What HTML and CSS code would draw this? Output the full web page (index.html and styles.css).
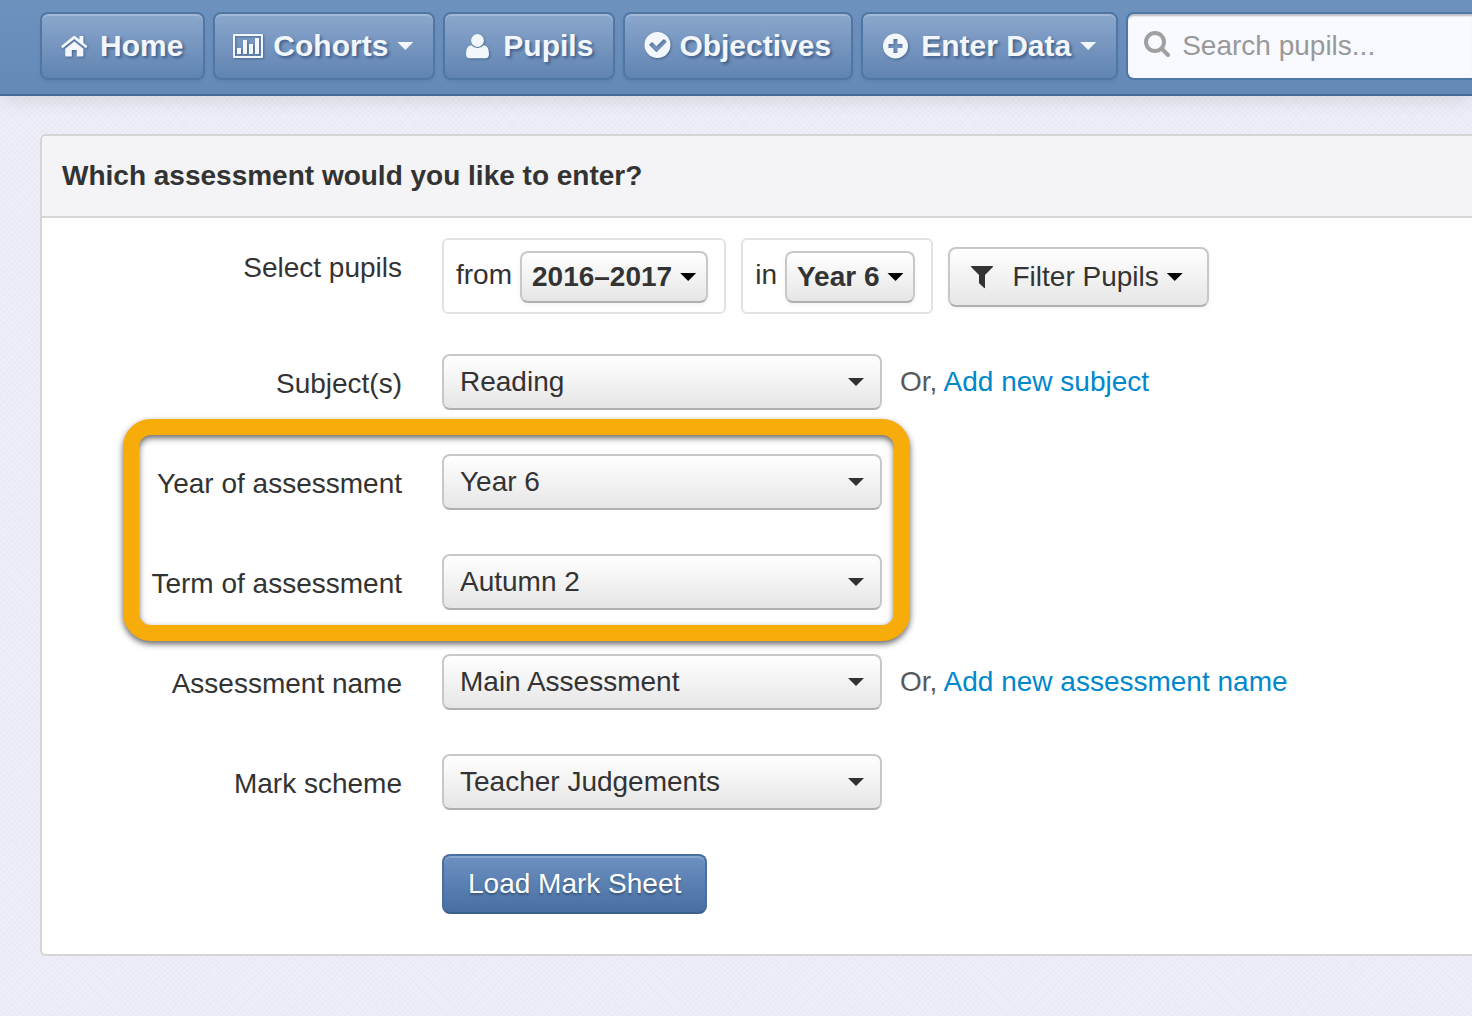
FILE: index.html
```html
<!DOCTYPE html>
<html lang="en">
<head>
<meta charset="utf-8">
<meta name="viewport" content="width=device-width, initial-scale=1">
<title>Enter Data</title>
<link rel="stylesheet" href="styles.css">
</head>
<body>
<header class="navbar">
  <nav class="nav">
    <a class="nav-item" href="#home">
      <svg class="icon" viewBox="0 0 26 26" aria-hidden="true"><path d="M3.200 15.800 12.300 8.400l9.100 7.400V22.500q0 1-1 1h-5.600V17h-5v6.500H4.200q-1 0-1-1z"/><path d="M12.300 2.800q.8 0 1.500.6l3.700 3V3.600q0-.6.6-.6h2.700q.6 0 .6.600v6.200l3.600 3q.5.500.1 1l-.7.900q-.5.500-1 .1L12.300 5.900 1.300 14.800q-.5.400-1-.1l-.8-.9q-.4-.5.100-1L10.900 3.400q.6-.6 1.400-.6z"/></svg>
      <span>Home</span>
    </a>
    <button class="nav-item" type="button">
      <svg class="icon" viewBox="0 0 26 26" aria-hidden="true"><path fill-rule="evenodd" d="M-1 1h28q1 0 1 1v22q0 1-1 1H-1q-1 0-1-1V2q0-1 1-1zM0 3v20h26V3z"/><path d="M2 15h4v6H2zM8 7h4v14H8zM14 11h4v10h-4zM20 5h4v16h-4z"/></svg>
      <span>Cohorts</span>
      <i class="caret nav-caret"></i>
    </button>
    <a class="nav-item" href="#pupils">
      <svg class="icon" viewBox="0 0 26 26" aria-hidden="true"><circle cx="12.500" cy="7.500" r="6.400"/><path d="M6.200 12.300q2.800 2.600 6.300 2.600t6.300-2.600q5.200.4 5.200 8.700 0 4.200-3.500 4.200h-16Q1 25.200 1 21q0-8.300 5.200-8.700z"/></svg>
      <span>Pupils</span>
    </a>
    <a class="nav-item nav-item-tight" href="#objectives">
      <svg class="icon" viewBox="0 1 26 26" aria-hidden="true"><path fill-rule="evenodd" d="M12.500 0a13 13 0 1 1 0 26 13 13 0 0 1 0-26zM4.700 13.500l6.200 6.200q.6.600 1.200 0l9.200-9.200q.6-.6 0-1.200l-1.800-1.800q-.6-.6-1.200 0L11.500 14.300l-3.800-3.800q-.6-.6-1.200 0l-1.800 1.800q-.6.600 0 1.200z"/></svg>
      <span>Objectives</span>
    </a>
    <button class="nav-item" type="button">
      <svg class="icon" viewBox="0 0 26 26" aria-hidden="true"><path fill-rule="evenodd" d="M12.500.500a12.500 12.500 0 1 1 0 25 12.500 12.500 0 0 1 0-25zM10.500 6v5h-5v4h5v5h4v-5h5v-4h-5V6z"/></svg>
      <span>Enter Data</span>
      <i class="caret nav-caret"></i>
    </button>
  </nav>
  <label class="search">
    <svg class="search-icon" viewBox="0 0 26 26" aria-hidden="true"><circle cx="11" cy="11" r="9"/><path d="M17.500 17.500 24 24"/></svg>
    <input type="text" placeholder="Search pupils..." aria-label="Search pupils">
  </label>
</header>

<main class="panel">
  <h1 class="panel-title">Which assessment would you like to enter?</h1>
  <form class="form">
    <div class="row row-pupils" role="group" aria-labelledby="pupils-label">
      <span class="row-label" id="pupils-label">Select pupils</span>
      <div class="pupil-controls">
        <div class="pick">
          <span>from</span>
          <button class="btn btn-pick" type="button">2016–2017<i class="caret"></i></button>
        </div>
        <div class="pick">
          <span>in</span>
          <button class="btn btn-pick" type="button">Year 6<i class="caret"></i></button>
        </div>
        <button class="btn btn-filter" type="button">
          <svg class="filter-icon" viewBox="0 0 24 24" aria-hidden="true"><path d="M1.500 1h21q.9 0 .4.900L15 10v12.500q0 1-.8.500L9.400 18.500Q9 18.200 9 17.500V10L1.100 1.900Q.6 1 1.500 1z"/></svg>
          Filter Pupils<i class="caret"></i>
        </button>
      </div>
    </div>
    <div class="row">
      <label class="row-label" for="subject">Subject(s)</label>
      <div class="select"><select id="subject"><option>Reading</option></select><i class="caret"></i></div>
      <p class="hint">Or, <a href="#new-subject">Add new subject</a></p>
    </div>
    <div class="highlighted">
      <div class="row">
        <label class="row-label" for="year">Year of assessment</label>
        <div class="select"><select id="year"><option>Year 6</option></select><i class="caret"></i></div>
      </div>
      <div class="row">
        <label class="row-label" for="term">Term of assessment</label>
        <div class="select"><select id="term"><option>Autumn 2</option></select><i class="caret"></i></div>
      </div>
    </div>
    <div class="row">
      <label class="row-label" for="name">Assessment name</label>
      <div class="select"><select id="name"><option>Main Assessment</option></select><i class="caret"></i></div>
      <p class="hint">Or, <a href="#new-name">Add new assessment name</a></p>
    </div>
    <div class="row">
      <label class="row-label" for="scheme">Mark scheme</label>
      <div class="select"><select id="scheme"><option>Teacher Judgements</option></select><i class="caret"></i></div>
    </div>
    <div class="actions">
      <button class="btn-primary" type="submit">Load Mark Sheet</button>
    </div>
  </form>
</main>
</body>
</html>
```
FILE: styles.css
```css
*,
*::after {
  box-sizing: border-box;
}

body {
  margin: 0;
  color: #333;
  font: 28px/40px "Liberation Sans", Arial, sans-serif;
  background-color: #eeeef8;
  background-image:
    repeating-linear-gradient(45deg, rgba(120, 120, 150, 0.03) 0 1px, transparent 1px 4px),
    repeating-linear-gradient(-45deg, rgba(120, 120, 150, 0.03) 0 1px, transparent 1px 4px);
}

button,
input,
select {
  margin: 0;
  font: inherit;
  color: inherit;
}

button,
select {
  cursor: pointer;
}

a {
  color: #0088cc;
  text-decoration: none;
}

.caret {
  flex: none;
  width: 16px;
  height: 8px;
  background: #000;
  clip-path: polygon(0 0, 100% 0, 50% 100%);
}

/* Top bar */

.navbar {
  display: flex;
  gap: 8px;
  padding: 12px 0 14px 40px;
  background: linear-gradient(#6e92be, #6489b7);
  border-bottom: 2px solid #436b9b;
  box-shadow: 0 2px 20px rgba(0, 0, 0, 0.12);
}

.nav {
  display: flex;
  gap: 8px;
}

.nav-item {
  display: flex;
  align-items: center;
  gap: 12px;
  height: 68px;
  padding: 0 20px;
  color: #f3f7fc;
  font-size: 30px;
  font-weight: bold;
  white-space: nowrap;
  text-shadow: 2px 2px 3px rgba(30, 60, 100, 0.6);
  background: linear-gradient(#8ba7cd, #6084b1);
  border: 2px solid #5077a3;
  border-radius: 8px;
  box-shadow: inset 0 2px 0 rgba(255, 255, 255, 0.2), 0 2px 3px rgba(0, 0, 0, 0.06);
}

.nav-item-tight {
  gap: 8px;
}

.icon {
  width: 26px;
  height: 26px;
  overflow: visible;
  fill: currentColor;
  filter: drop-shadow(1px 1px 1px rgba(30, 60, 100, 0.5));
}

.nav-caret {
  margin-left: -3px;
  background: #f3f7fc;
}

.search {
  display: flex;
  flex: 1;
  align-items: center;
  gap: 12px;
  min-width: 0;
  padding-left: 16px;
  background: #f8faff;
  border: 2px solid #5077a3;
  border-right: 0;
  border-radius: 8px 0 0 8px;
  box-shadow: inset 0 3px 2px -1px rgba(0, 0, 0, 0.25);
}

.search-icon {
  flex: none;
  width: 26px;
  height: 26px;
  margin-bottom: 4px;
  fill: none;
  stroke: #a0a0a0;
  stroke-width: 4;
  stroke-linecap: round;
}

.search input {
  flex: 1;
  min-width: 0;
  padding: 0;
  background: none;
  border: 0;
  outline: 0;
}

.search input::placeholder {
  color: #999;
  opacity: 1;
}

/* Panel */

.panel {
  margin: 38px 0 60px 40px;
  background: #fff;
  border: 2px solid #d5d5d5;
  border-right: 0;
  border-radius: 6px 0 0 6px;
}

.panel-title {
  margin: 0;
  padding: 20px;
  font-size: 28px;
  line-height: 40px;
  background: #f4f4f6;
  border-bottom: 2px solid #d5d5d5;
  border-radius: 4px 0 0 0;
}

.form {
  padding: 20px 0 40px;
}

.row {
  display: flex;
  margin-bottom: 44px;
}

.row-pupils {
  margin-bottom: 40px;
}

.row-label {
  flex: none;
  width: 360px;
  margin-right: 40px;
  padding-top: 10px;
  text-align: right;
}

.pupil-controls {
  display: flex;
  align-items: flex-start;
  gap: 15px;
  white-space: nowrap;
}

.pick {
  display: flex;
  align-items: center;
  gap: 8px;
  height: 76px;
  padding: 2px 16px 0 12px;
  border: 2px solid #e3e3e3;
  border-radius: 6px;
}

.pick span {
  padding-bottom: 4px;
}

.btn,
.select select {
  background: linear-gradient(#fff, #e6e6e6);
  border: 2px solid #c8c8c8;
  border-bottom-color: #b0b0b0;
  border-radius: 8px;
}

.btn {
  display: flex;
  align-items: center;
  gap: 8px;
  box-shadow: 0 2px 4px rgba(0, 0, 0, 0.05);
}

.btn-pick {
  height: 52px;
  padding: 0 10px;
  font-weight: bold;
}

.btn-filter {
  height: 60px;
  margin-top: 9px;
  padding: 0 24px 0 20px;
}

.filter-icon {
  width: 24px;
  height: 24px;
  margin-right: 10px;
  fill: #333;
}

.select {
  display: grid;
  flex: none;
  align-items: center;
  width: 440px;
}

.select select,
.select .caret {
  grid-area: 1 / 1;
}

.select select {
  width: 100%;
  height: 56px;
  padding: 0 48px 0 16px;
  appearance: none;
}

.select .caret {
  justify-self: end;
  margin-right: 18px;
  background: #333;
  pointer-events: none;
}

.hint {
  margin: 0 0 0 18px;
  padding-top: 8px;
  color: #595959;
}

/* Marker drawn round the year and term fields */

.highlighted {
  position: relative;
}

.highlighted::after {
  content: "";
  position: absolute;
  top: -35px;
  bottom: -31px;
  left: 81px;
  width: 787px;
  border: 16px solid #f8ac09;
  border-radius: 28px;
  filter: drop-shadow(0 3px 3px rgba(0, 0, 0, 0.6));
  pointer-events: none;
}

.highlighted .row:last-child {
  margin-bottom: 0;
}

.highlighted + .row {
  margin-top: 44px;
}

.actions {
  padding-left: 400px;
}

.btn-primary {
  display: block;
  height: 60px;
  padding: 0 24px;
  color: #fff;
  text-shadow: 0 2px 2px rgba(0, 0, 0, 0.3);
  background: linear-gradient(#6c91c1, #486fa2);
  border: 2px solid #486fa0;
  border-bottom-color: #3c6090;
  border-radius: 8px;
  box-shadow: inset 0 2px 0 rgba(255, 255, 255, 0.2);
}
```
